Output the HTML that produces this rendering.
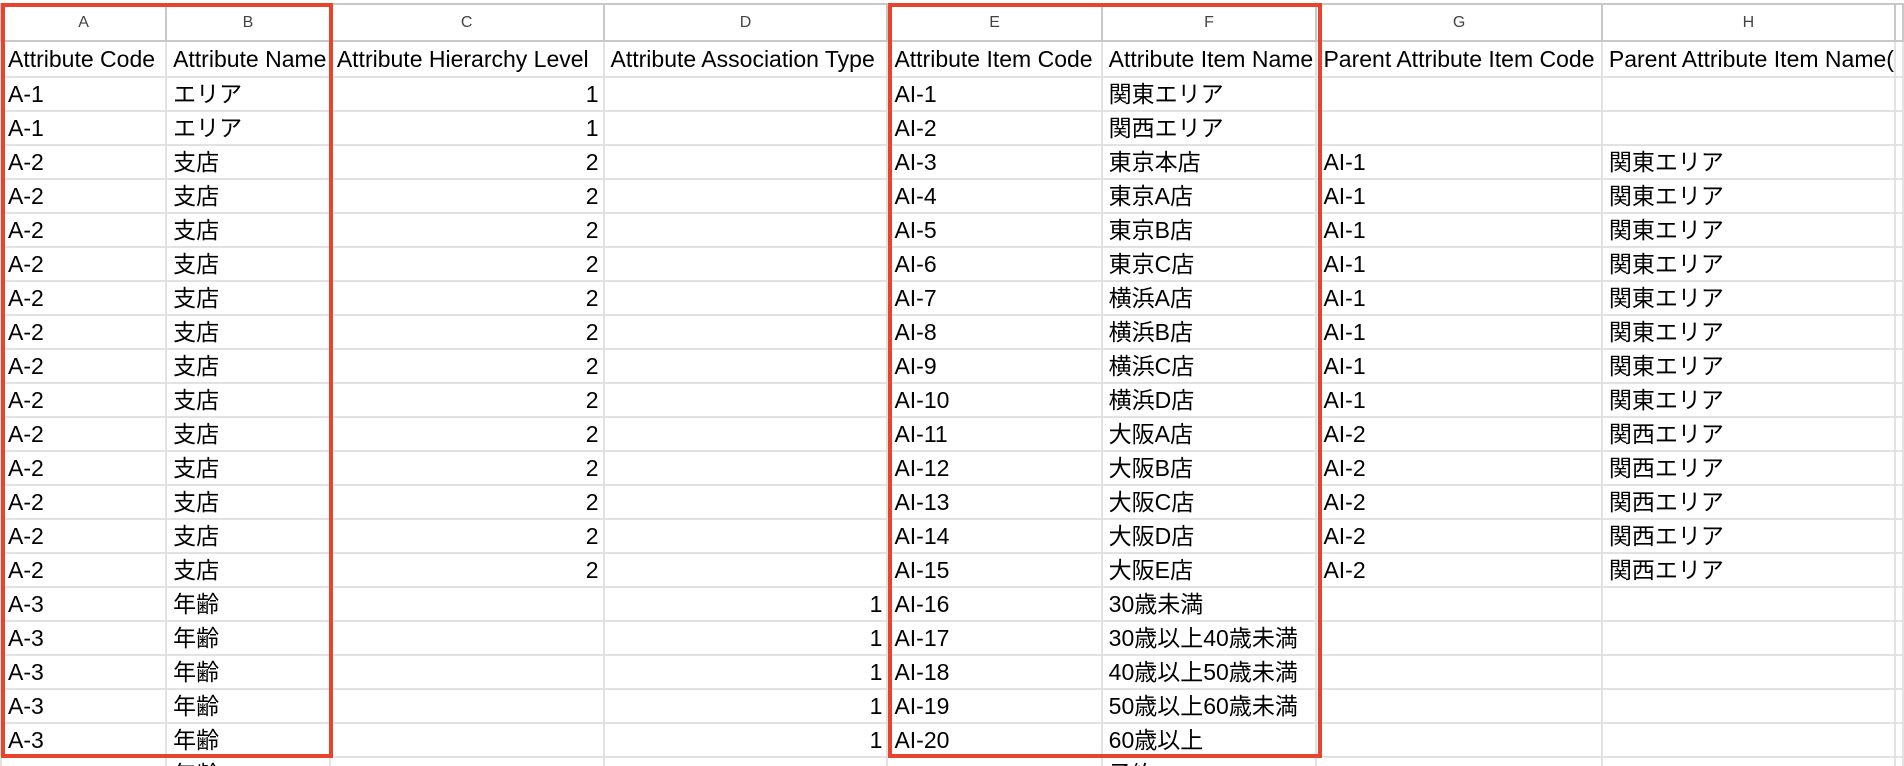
<!DOCTYPE html>
<html><head><meta charset="utf-8"><style>
html,body{margin:0;padding:0;background:#fff;width:1904px;height:766px;overflow:hidden}
body{font-family:"Liberation Sans","Noto Sans CJK JP",sans-serif;position:relative}
table{position:absolute;left:0;top:3px;border-collapse:collapse;table-layout:fixed}
td{border:2px solid #e2e2e2;padding:0 0 0 6px;height:32px;font-size:23px;color:#000;white-space:nowrap;overflow:hidden;line-height:32px}
tr.L td{height:35px;font-size:16px;color:#444;text-align:center;border-color:#c8c8c8;padding:0}
tr.H td{height:34px;overflow:visible}
td.r{text-align:right;padding:0 4px 0 0}
.box{position:absolute;border:4px solid #e8432c;box-sizing:border-box}
</style></head><body>
<table>
<colgroup><col style="width:166px"><col style="width:164px"><col style="width:275px"><col style="width:285px"><col style="width:215px"><col style="width:215px"><col style="width:286px"><col style="width:292px"><col style="width:6px"></colgroup>
<tr class="L"><td>A</td><td>B</td><td>C</td><td>D</td><td>E</td><td>F</td><td>G</td><td>H</td><td></td></tr>
<tr class="H"><td>Attribute Code</td><td style="overflow:hidden">Attribute Name</td><td>Attribute Hierarchy Level</td><td>Attribute Association Type</td><td>Attribute Item Code</td><td style="overflow:hidden">Attribute Item Name</td><td>Parent Attribute Item Code</td><td style="overflow:hidden">Parent Attribute Item Name(</td><td></td></tr>
<tr><td>A-1</td><td>エリア</td><td class="r">1</td><td></td><td>AI-1</td><td>関東エリア</td><td></td><td></td><td></td></tr>
<tr><td>A-1</td><td>エリア</td><td class="r">1</td><td></td><td>AI-2</td><td>関西エリア</td><td></td><td></td><td></td></tr>
<tr><td>A-2</td><td>支店</td><td class="r">2</td><td></td><td>AI-3</td><td>東京本店</td><td>AI-1</td><td>関東エリア</td><td></td></tr>
<tr><td>A-2</td><td>支店</td><td class="r">2</td><td></td><td>AI-4</td><td>東京A店</td><td>AI-1</td><td>関東エリア</td><td></td></tr>
<tr><td>A-2</td><td>支店</td><td class="r">2</td><td></td><td>AI-5</td><td>東京B店</td><td>AI-1</td><td>関東エリア</td><td></td></tr>
<tr><td>A-2</td><td>支店</td><td class="r">2</td><td></td><td>AI-6</td><td>東京C店</td><td>AI-1</td><td>関東エリア</td><td></td></tr>
<tr><td>A-2</td><td>支店</td><td class="r">2</td><td></td><td>AI-7</td><td>横浜A店</td><td>AI-1</td><td>関東エリア</td><td></td></tr>
<tr><td>A-2</td><td>支店</td><td class="r">2</td><td></td><td>AI-8</td><td>横浜B店</td><td>AI-1</td><td>関東エリア</td><td></td></tr>
<tr><td>A-2</td><td>支店</td><td class="r">2</td><td></td><td>AI-9</td><td>横浜C店</td><td>AI-1</td><td>関東エリア</td><td></td></tr>
<tr><td>A-2</td><td>支店</td><td class="r">2</td><td></td><td>AI-10</td><td>横浜D店</td><td>AI-1</td><td>関東エリア</td><td></td></tr>
<tr><td>A-2</td><td>支店</td><td class="r">2</td><td></td><td>AI-11</td><td>大阪A店</td><td>AI-2</td><td>関西エリア</td><td></td></tr>
<tr><td>A-2</td><td>支店</td><td class="r">2</td><td></td><td>AI-12</td><td>大阪B店</td><td>AI-2</td><td>関西エリア</td><td></td></tr>
<tr><td>A-2</td><td>支店</td><td class="r">2</td><td></td><td>AI-13</td><td>大阪C店</td><td>AI-2</td><td>関西エリア</td><td></td></tr>
<tr><td>A-2</td><td>支店</td><td class="r">2</td><td></td><td>AI-14</td><td>大阪D店</td><td>AI-2</td><td>関西エリア</td><td></td></tr>
<tr><td>A-2</td><td>支店</td><td class="r">2</td><td></td><td>AI-15</td><td>大阪E店</td><td>AI-2</td><td>関西エリア</td><td></td></tr>
<tr><td>A-3</td><td>年齢</td><td></td><td class="r">1</td><td>AI-16</td><td>30歳未満</td><td></td><td></td><td></td></tr>
<tr><td>A-3</td><td>年齢</td><td></td><td class="r">1</td><td>AI-17</td><td>30歳以上40歳未満</td><td></td><td></td><td></td></tr>
<tr><td>A-3</td><td>年齢</td><td></td><td class="r">1</td><td>AI-18</td><td>40歳以上50歳未満</td><td></td><td></td><td></td></tr>
<tr><td>A-3</td><td>年齢</td><td></td><td class="r">1</td><td>AI-19</td><td>50歳以上60歳未満</td><td></td><td></td><td></td></tr>
<tr><td>A-3</td><td>年齢</td><td></td><td class="r">1</td><td>AI-20</td><td>60歳以上</td><td></td><td></td><td></td></tr>
<tr><td></td><td>年齢</td><td></td><td></td><td></td><td>予約</td><td></td><td></td><td></td></tr>
</table>
<div class="box" style="left:1px;top:3px;width:332px;height:755px"></div>
<div class="box" style="left:888px;top:3px;width:434px;height:755px"></div>
</body></html>
